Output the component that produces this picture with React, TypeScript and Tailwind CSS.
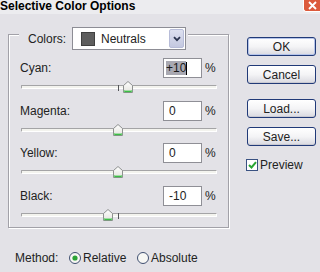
import React from "react";

function Thumb() {
  return (
    <svg width="10" height="12" viewBox="0 0 10 12" className="block">
      <defs>
        <linearGradient id="thumbg" x1="0" y1="0" x2="0" y2="1">
          <stop offset="0" stopColor="#ffffff" />
          <stop offset="1" stopColor="#e4e4de" />
        </linearGradient>
      </defs>
      <path d="M0.5 4.5 L5 0.5 L9.5 4.5 V11.5 H0.5 Z" fill="url(#thumbg)" stroke="#8e9090" />
      <path d="M1.2 10.4 H8.8" stroke="#3cbf46" strokeWidth="1.6" />
      <path d="M1.2 9 V10.6 M8.8 9 V10.6" stroke="#7ad27f" strokeWidth="1" />
    </svg>
  );
}

function Slider({ value }: { value: number }) {
  return (
    <div className="relative ml-[1px] h-[20px] w-[196px] pt-[7px]">
      <div className="h-[4px] w-full rounded-[1px] border border-t-[#a4a4a6] border-l-[#a4a4a6] border-b-[#ffffff] border-r-[#ffffff] bg-[#f3f3ee]" />
      <div className="absolute left-[97px] top-[7px] h-[6px] w-[1px] bg-[#55565a]" />
      <div className="absolute top-[3px]" style={{ left: 92 + value }}>
        <Thumb />
      </div>
    </div>
  );
}

function Row({
  label,
  value,
  sliderValue,
  selected,
  mt,
}: {
  label: string;
  value: string;
  sliderValue: number;
  selected?: boolean;
  mt: string;
}) {
  return (
    <div className={mt}>
      <div className="flex h-[20px] items-center">
        <span className="w-[143px]">{label}</span>
        <div className="flex h-[20px] w-[39px] items-center border border-[#8f8f96] bg-white pl-[2px]">
          {selected ? (
            <span className="flex items-center">
              <span className="bg-[#a9a9b2] leading-[14px] text-[#1a1a1a]">{value}</span>
              <span className="h-[13px] w-[1px] bg-black" />
            </span>
          ) : (
            <span className="pl-[3px]">{value}</span>
          )}
        </div>
        <span className="ml-[3px]">%</span>
      </div>
      <Slider value={sliderValue} />
    </div>
  );
}

function Button({ children, primary, mt }: { children: React.ReactNode; primary?: boolean; mt: string }) {
  return (
    <div
      className={`${mt} flex h-[19px] w-[69px] items-center justify-center rounded-[3px] border border-[#213a78] bg-gradient-to-b from-[#ffffff] via-[#f4f4f6] to-[#d9d9e0] ${
        primary ? "shadow-[inset_0_0_0_1px_#b5c4ea]" : "shadow-[inset_0_-1px_0_#c9c9d2]"
      }`}
    >
      {children}
    </div>
  );
}

export default function App() {
  return (
    <div className="relative h-[272px] w-[320px] overflow-hidden bg-[#e3e2e7] font-['Liberation_Sans',Arial,sans-serif] text-[12px] text-[#222222]">
      {/* title bar */}
      <div className="relative h-[15px] bg-[#ececef]">
        <div className="-mt-[1px] whitespace-nowrap text-[12px] font-bold leading-[14px] text-black">
          Selective Color Options
        </div>
        <div className="absolute right-0 top-0 flex h-[13px] w-[17px] items-center justify-center rounded-bl-[3px] border-b border-l border-[#ffffff] bg-[#dc5a3c]">
          <svg width="9" height="9" viewBox="0 0 9 9">
            <path d="M1 1 L8 8 M8 1 L1 8" stroke="#ffffff" strokeWidth="1.8" />
          </svg>
        </div>
      </div>

      <div className="flex">
        {/* left column */}
        <div className="w-[247px]">
          <div className="ml-[8px] mt-[20px] h-[194px] w-[221px] border border-[#a2a1a8] shadow-[1px_1px_0_#ffffff,inset_1px_1px_0_#ffffff]">
            <div className="-mt-[8px] ml-[10px] flex h-[23px] w-[169px] items-center bg-[#e3e2e7] pl-[9px]">
              <span className="w-[44px]">Colors:</span>
              <div className="flex h-[23px] w-[114px] items-center border border-[#8d8d95] bg-white">
                <span className="ml-[8px] h-[14px] w-[14px] border border-[#404040] bg-[#5e5e5e]" />
                <span className="ml-[6px] text-[12px]">Neutrals</span>
                <div className="ml-auto mr-[1px] flex h-[19px] w-[15px] items-center justify-center rounded-[2px] border border-[#b7bcd8] bg-gradient-to-b from-[#dde0f0] to-[#c4c8e0]">
                  <svg width="8" height="6" viewBox="0 0 8 6">
                    <path d="M1 1.2 L4 4.2 L7 1.2" stroke="#2c3550" strokeWidth="1.8" fill="none" />
                  </svg>
                </div>
              </div>
            </div>
            <div className="pl-[11px]">
              <Row label="Cyan:" value="+10" sliderValue={10} selected mt="mt-[8px]" />
              <Row label="Magenta:" value="0" sliderValue={0} mt="mt-[3px]" />
              <Row label="Yellow:" value="0" sliderValue={0} mt="mt-[2px]" />
              <Row label="Black:" value="-10" sliderValue={-10} mt="mt-[3px]" />
            </div>
          </div>

          <div className="mt-[20px] flex h-[20px] items-center pl-[15px]">
            <span className="w-[54px]">Method:</span>
            <svg width="12" height="12" viewBox="0 0 12 12">
              <circle cx="6" cy="6" r="5.5" fill="#f7f7f4" stroke="#3f4f70" />
              <circle cx="6" cy="6" r="2.6" fill="#2ba336" />
            </svg>
            <span className="ml-[2px] w-[54px]">Relative</span>
            <svg width="12" height="12" viewBox="0 0 12 12">
              <circle cx="6" cy="6" r="5.5" fill="#f7f7f4" stroke="#3f4f70" />
            </svg>
            <span className="ml-[2px]">Absolute</span>
          </div>
        </div>

        {/* right column */}
        <div className="flex w-[69px] flex-col">
          <Button primary mt="mt-[23px]">OK</Button>
          <Button mt="mt-[9px]">Cancel</Button>
          <Button mt="mt-[15px]">Load...</Button>
          <Button mt="mt-[9px]">Save...</Button>
          <div className="-ml-[1px] mt-[12px] flex h-[14px] items-center">
            <div className="flex h-[12px] w-[12px] items-center justify-center border border-[#3a5282] bg-white">
              <svg width="9" height="8" viewBox="0 0 9 8">
                <path d="M1 4 L3.5 6.5 L8 1.2" stroke="#28a532" strokeWidth="2" fill="none" />
              </svg>
            </div>
            <span className="ml-[2px]">Preview</span>
          </div>
        </div>
      </div>
    </div>
  );
}
